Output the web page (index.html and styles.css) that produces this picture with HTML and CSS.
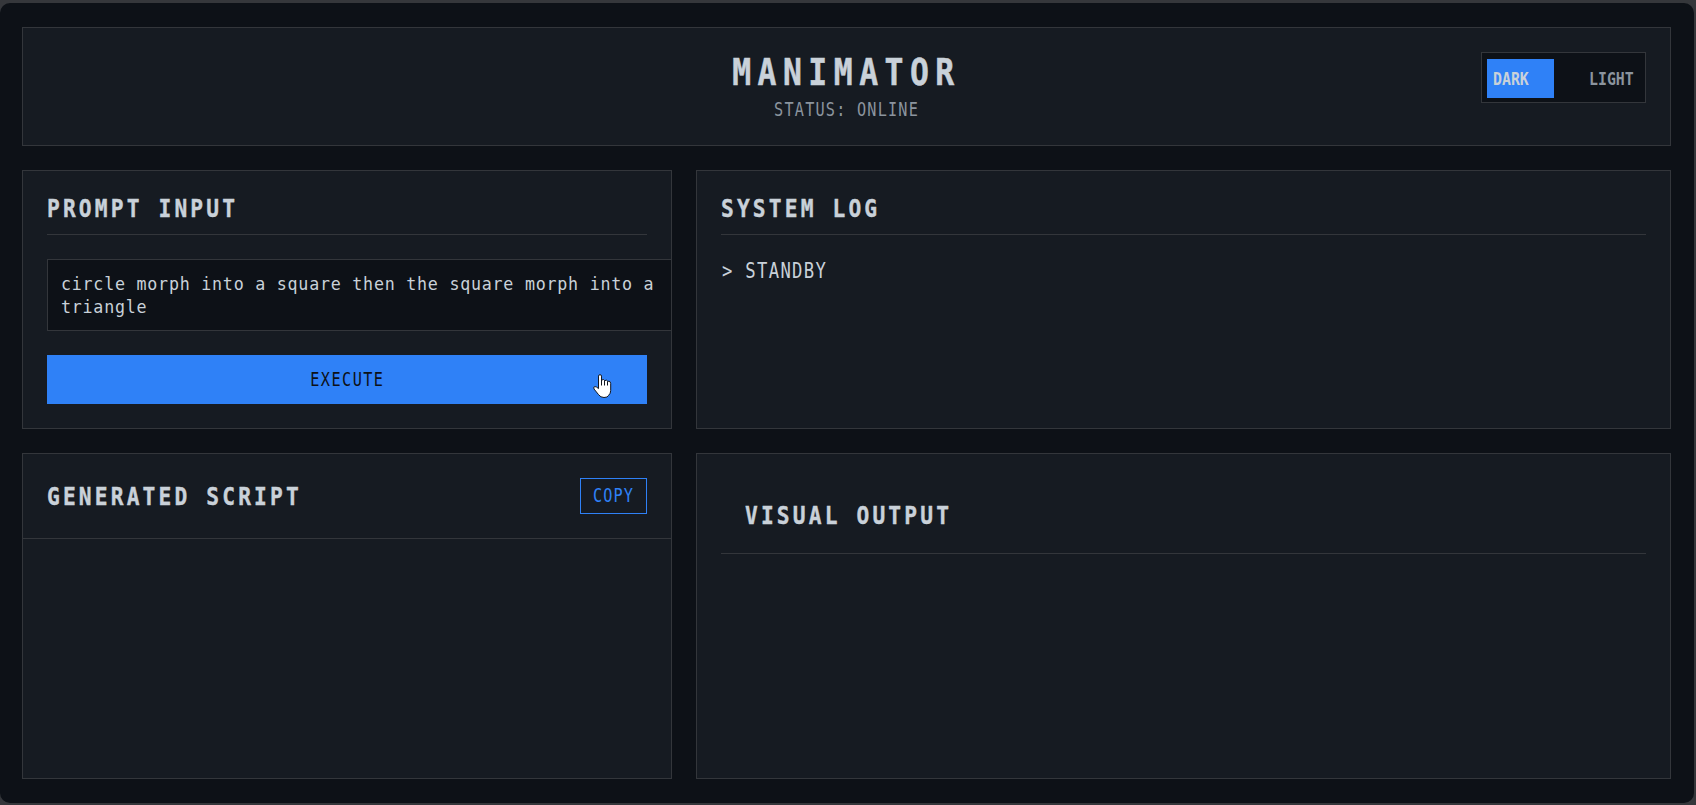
FILE: index.html
```html
<!DOCTYPE html>
<html lang="en">
<head>
<meta charset="utf-8">
<title>Manimator</title>
<link rel="stylesheet" href="styles.css">
</head>
<body>
<div class="window">
  <header class="panel header">
    <div class="brand">
      <h1><span class="t t-title">MANIMATOR</span></h1>
      <p class="status"><span class="t t-status">STATUS: ONLINE</span></p>
    </div>
    <div class="toggle">
      <div class="option active"><span class="t t-option">DARK</span></div>
      <div class="option"><span class="t t-option">LIGHT</span></div>
    </div>
  </header>
  <main class="grid">
    <section class="panel prompt">
      <h2 class="ruled"><span class="t">PROMPT INPUT</span></h2>
      <div class="input"><span class="t t-input">circle morph into a square then the square morph into a<br>triangle</span></div>
      <button class="execute"><span class="t t-button">EXECUTE</span>
        <svg class="cursor" viewBox="0 0 19 25" width="19" height="25"><path d="M5.5 14V2.1Q5.5.7 7 .7T8.500 2.100V6.100Q10.900 4.700 11.700 6.600Q13.900 5.500 14.700 7.200Q17.700 6.700 17.700 9.300V16.500Q17.700 19.600 15.500 21.500Q14.600 23.500 11 23.500Q7.600 23.500 5.600 20.700L1 15Q0 12.600 2 12.600Q3.500 12.600 5.500 14.600Z" fill="#fff" stroke="#10151f" stroke-width="1"/><path d="M8.500 6V11.500M11.500 6.500V11.500M14.500 7.300V11.500" fill="none" stroke="#10151f"/></svg>
      </button>
    </section>
    <section class="panel log">
      <h2 class="ruled"><span class="t">SYSTEM LOG</span></h2>
      <p class="entry"><span class="t t-log">&gt; STANDBY</span></p>
    </section>
    <section class="panel script">
      <div class="script-head">
        <h2><span class="t">GENERATED SCRIPT</span></h2>
        <button class="copy"><span class="t t-copy">COPY</span></button>
      </div>
    </section>
    <section class="panel visual">
      <h2 class="visual-title"><span class="t">VISUAL OUTPUT</span></h2>
    </section>
  </main>
</div>
</body>
</html>
```
FILE: styles.css
```css
* { box-sizing: border-box; }

body {
  margin: 0;
  height: 805px;
  padding: 3px 2px 2px 0;
  background: #35373b;
  color: #c9d1d9;
  font-family: "DejaVu Sans Mono", monospace;
  overflow: hidden;
}

.window {
  height: 800px;
  padding: 24px 23px 24px 22px;
  border-radius: 10px;
  background: #0d1117;
  display: flex;
  flex-direction: column;
  gap: 24px;
}

.panel {
  background: #161b22;
  border: 1px solid #33363b;
  overflow: hidden;
}

h1, h2, p { margin: 0; }

/* Condensed lettering */
.t {
  display: inline-block;
  white-space: nowrap;
  transform: scaleX(.85);
  transform-origin: left center;
}

.header {
  height: 119px;
  flex: none;
  padding: 24px;
  display: grid;
  grid-template-columns: 165px 1fr 165px;
}

.brand { grid-column: 2; text-align: center; }
h1 { padding-top: 1px; font-size: 37px; line-height: 40px; -webkit-text-stroke: .5px; }
.t-title { letter-spacing: 7.6px; transform-origin: center; }
.status { margin-top: 4px; font-size: 19px; line-height: 24px; color: #8b949e; }
.t-status { letter-spacing: 1.5px; transform: scaleX(.8); transform-origin: center; margin-left: 1px; }

.toggle {
  width: 165px;
  height: 51px;
  padding: 6px 5px 4px;
  border: 1px solid #33363b;
  background: #0d1117;
  display: grid;
  grid-template-columns: 67px 57px;
  justify-content: space-between;
}
.option {
  padding-left: 6px;
  font-size: 17.5px;
  font-weight: bold;
  line-height: 40px;
  height: 39px;
  color: #8b949e;
}
.option.active { background: #2f81f7; color: #c9d1d9; }

.grid {
  flex: 1;
  display: grid;
  grid-template-columns: 650px 975px;
  grid-template-rows: 259px 326px;
  gap: 24px;
}

h2 { padding-top: 1px; font-size: 25px; line-height: 26px; letter-spacing: 3.69px; -webkit-text-stroke: .4px; }
.ruled { padding-bottom: 12px; border-bottom: 1px solid #33363b; margin-bottom: 24px; }

.prompt, .log, .visual { padding: 24px; }

.input {
  width: 626px;
  height: 72px;
  padding: 12px 12px 12px 13px;
  border: 1px solid #33363b;
  background: #0d1117;
  font-size: 18.5px;
  line-height: 23px;
}
.t-input { letter-spacing: .85px; transform: scaleX(.9); }

button { font-family: inherit; padding: 0; border: 0; }

.execute {
  position: relative;
  display: block;
  width: 100%;
  height: 49px;
  padding-bottom: 2px;
  margin-top: 24px;
  background: #2f81f7;
  color: #0d1117;
  font-size: 19px;
}
.t-button { letter-spacing: 1.8px; transform: scaleX(.8); transform-origin: center; }
.cursor { position: absolute; left: 546px; top: 19px; }

.entry { padding-left: 1px; font-size: 21px; line-height: 24px; }
.t-log { letter-spacing: 1.6px; transform: scaleX(.82); }

.script-head {
  height: 85px;
  padding: 0 24px;
  border-bottom: 1px solid #33363b;
  display: flex;
  align-items: center;
  justify-content: space-between;
}
.copy {
  width: 67px;
  height: 36px;
  padding-bottom: 2px;
  border: 1px solid #2f81f7;
  background: transparent;
  color: #2f81f7;
  font-size: 19px;
}
.t-copy { letter-spacing: 1.3px; transform: scaleX(.8); transform-origin: center; margin: 0 -8px; }

.visual-title { padding: 25px 24px 24px; border-bottom: 1px solid #33363b; }
```
